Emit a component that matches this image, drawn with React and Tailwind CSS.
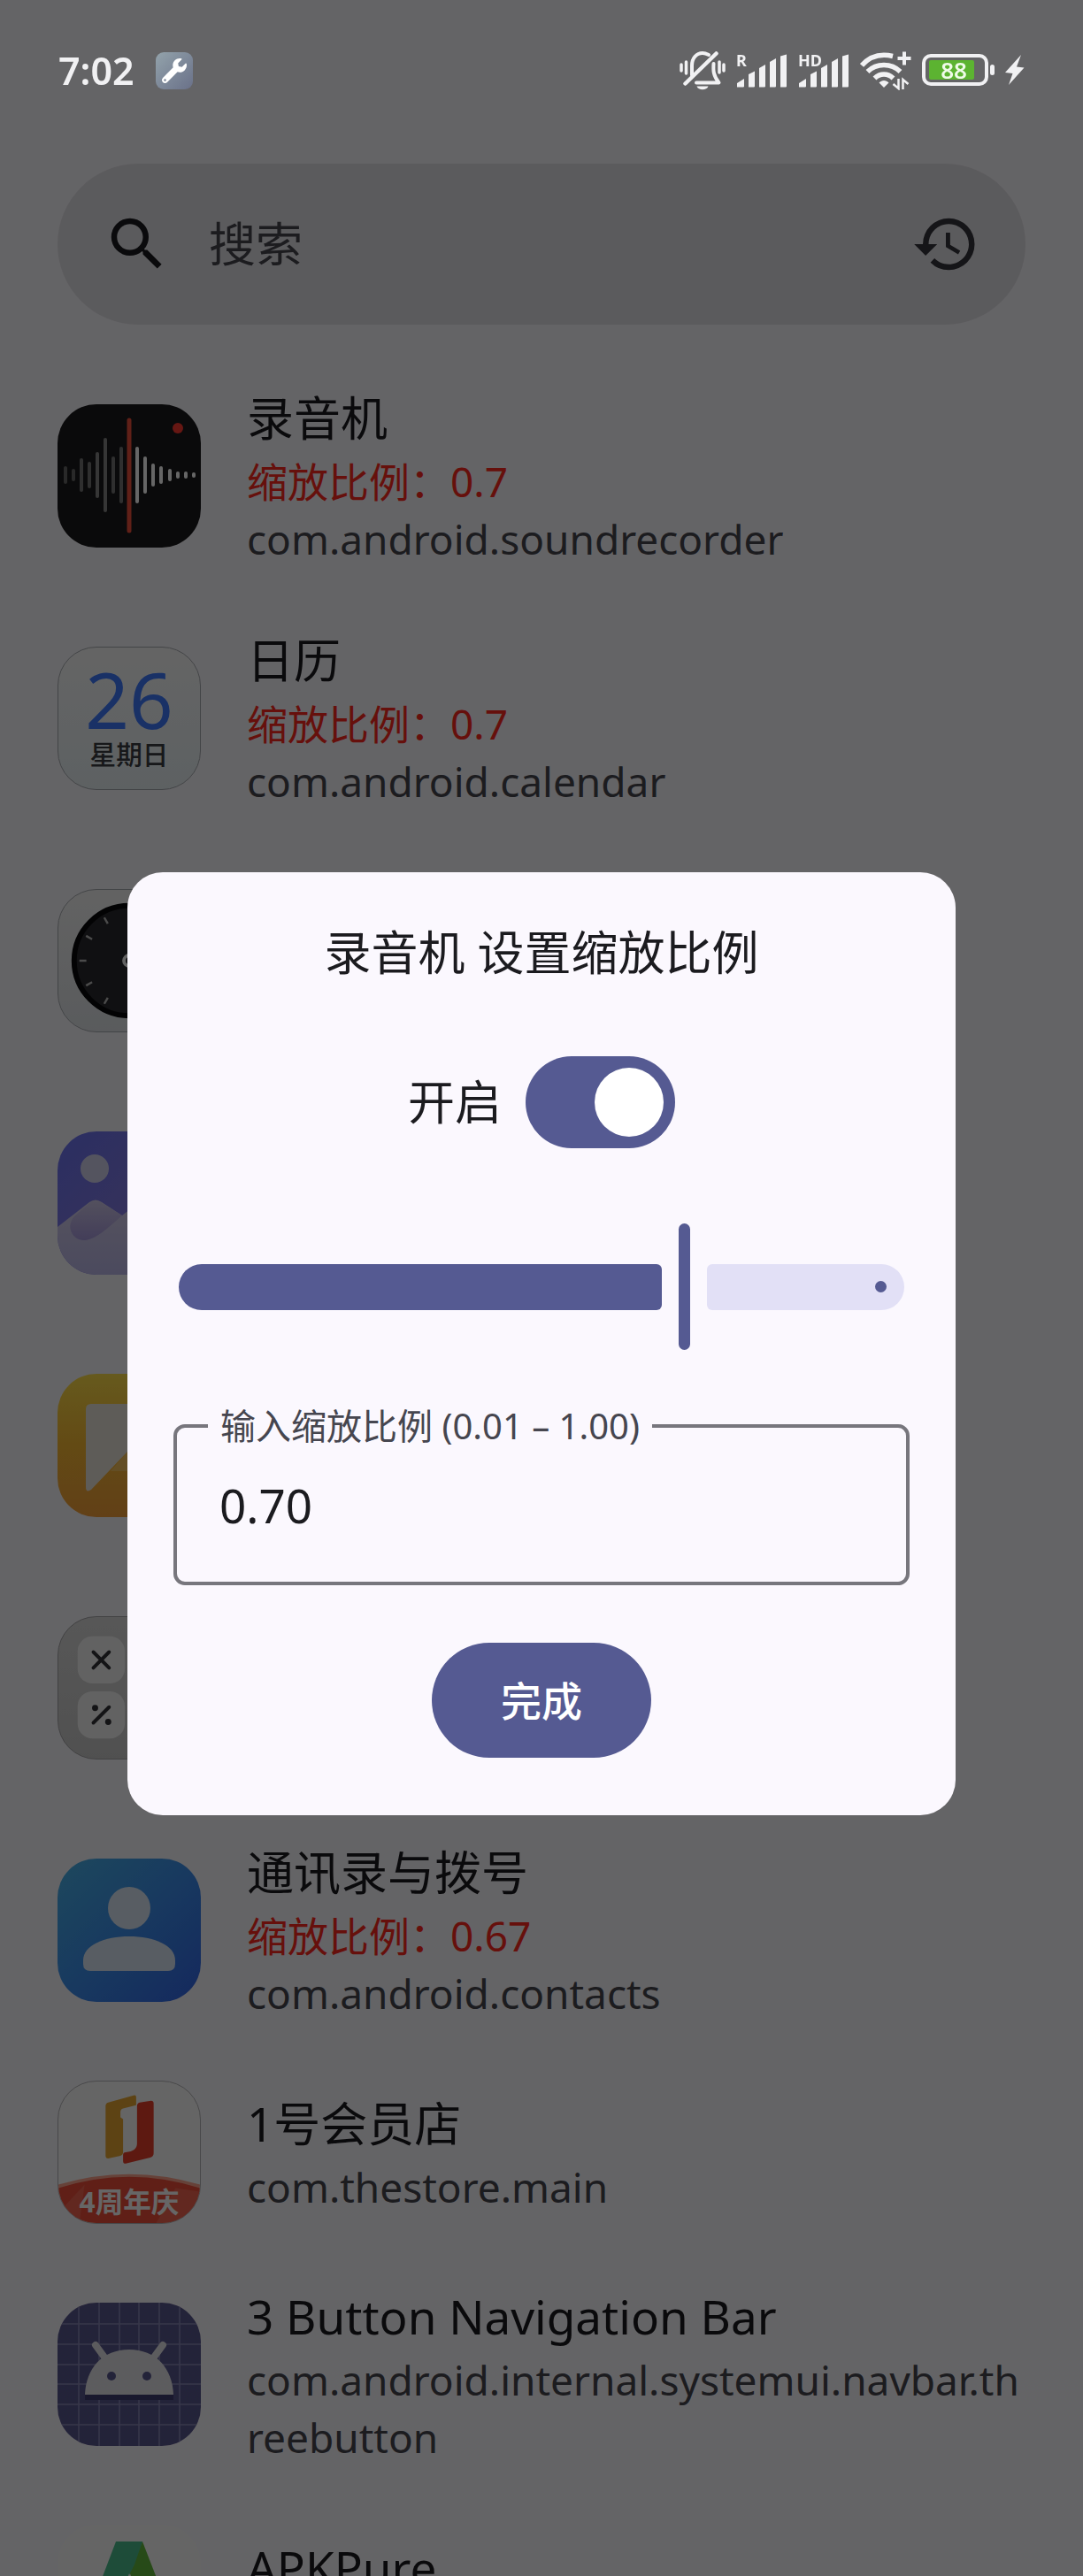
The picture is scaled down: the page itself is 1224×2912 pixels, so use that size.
import React, { useState } from "react";
import { MdSearch, MdHistory } from "react-icons/md";
import { FaWrench } from "react-icons/fa";

/* ---------- status bar drawings ---------- */

function MutedBell() {
  return (
    <svg viewBox="0 0 52 44" className="h-[44px] w-[52px]" fill="none" stroke="currentColor" strokeLinecap="round" strokeLinejoin="round">
      <path d="M14 27V16C14 8 19 2 26 2c3 0 5 1 7 2" strokeWidth="4" />
      <path d="M6.500 36.500 41.500 2.500" strokeWidth="4.500" />
      <path d="M38.500 14c-.5 8-.5 13 6 21.500H19" strokeWidth="4" />
      <path d="M2 15v7M7.500 12v13M45 12v12M50 15v7" strokeWidth="3.500" />
      <path d="M19.500 39.500h13c-1.500 5-11.500 5-13 0z" fill="currentColor" stroke="none" />
    </svg>
  );
}

function Signal({ label }) {
  return (
    <svg viewBox="0 0 58 44" className="h-[44px] w-[58px]" fill="currentColor">
      <path d="M1 40.500v-4.500l8-5v8.500q0 1-1 1zM14 40.500V26l7-3.500v17q0 1-1 1zM26 40.500V19l7-4v24.500q0 1-1 1zM38 40.500V12l7-4v31.500q0 1-1 1zM50 40.500V5.500l7-2v36q0 1-1 1z" />
      <text x="0" y="16.500" fontSize="18" fontWeight="700">{label}</text>
    </svg>
  );
}

function Wifi() {
  return (
    <svg viewBox="0 0 58 44" className="h-[44px] w-[58px]" fill="none" stroke="currentColor" strokeLinecap="butt">
      <path d="M2 16C12 4.500 24 2.500 37 5.500" strokeWidth="5.500" />
      <path d="M8.500 23c10-10 27-10 37 0" strokeWidth="5.500" />
      <path d="M16.500 30.500c6-6 15-6 21 0" strokeWidth="5.500" />
      <path d="M21.500 35.500c3-3.500 8-3.500 11 0L27 41z" fill="currentColor" stroke="none" />
      <path d="M50 .5v15M42.500 8h15" strokeWidth="4" />
      <path d="M41 32v0M43.500 31v11l-6-5M48.500 43V32l6 5" strokeWidth="2.500" />
    </svg>
  );
}

function Battery() {
  return (
    <svg viewBox="0 0 82 44" className="h-[44px] w-[82px]">
      <rect x="2" y="5" width="71" height="32" rx="8" fill="none" stroke="currentColor" strokeWidth="4" />
      <rect x="8" y="10" width="51" height="22" rx="2" fill="#5cb331" />
      <rect x="77" y="15" width="5" height="12" rx="2.500" fill="currentColor" />
      <text x="36" y="30.500" fontSize="26" fontWeight="600" textAnchor="middle" fill="#effbe9">88</text>
    </svg>
  );
}

function Bolt() {
  return (
    <svg viewBox="0 0 22 44" className="h-[44px] w-[22px]" fill="currentColor">
      <path d="M18 4 0 24l8.500 1L4 38 21.500 18.500 13 17.500z" />
    </svg>
  );
}

function StatusBar() {
  return (
    <header className="relative z-20 flex h-[160px] items-center justify-between px-[66px] text-[#f1f1f3]">
      <div className="flex items-center gap-6">
        <time className="text-[43px] leading-[52px] font-semibold">7:02</time>
        <span className="flex size-[42px] items-center justify-center rounded-[9px] bg-gradient-to-br from-[#93a3ab] to-[#6a7189] text-white">
          <FaWrench className="size-[28px]" aria-hidden="true" />
        </span>
      </div>
      <div className="flex items-center gap-3">
        <MutedBell />
        <Signal label="R" />
        <Signal label="HD" />
        <Wifi />
        <Battery />
        <Bolt />
      </div>
    </header>
  );
}

/* ---------- app icons ---------- */

function AppIcon({ className, children }) {
  return (
    <span className={"block size-[162px] shrink-0 overflow-hidden rounded-[44px] " + className}>
      <svg viewBox="0 0 162 162" className="size-full" aria-hidden="true">{children}</svg>
    </span>
  );
}

const WAVE = [
  [9, 10, "#666"], [18, 7, "#666"], [27, 19, "#777"], [36, 15, "#777"],
  [45, 26, "#888"], [54, 42, "#888"], [63, 21, "#777"], [72, 32, "#777"],
  [90, 32, "#fff"], [99, 21, "#fff"], [108, 13, "#fff"], [117, 10, "#fff"],
  [127, 7, "#fff"], [136, 4, "#fff"], [145, 4, "#fff"], [154, 3, "#fff"],
];

function RecorderIcon() {
  return (
    <AppIcon className="bg-[#1a1a1c]">
      {WAVE.map(([x, h, c]) => (
        <path key={x} d={`M${x} ${80 - h + 2}V${80 + h - 2}`} stroke={c} strokeWidth="4" strokeLinecap="round" />
      ))}
      <path d="M81 18V143" stroke="#f0503c" strokeWidth="5" strokeLinecap="round" />
      <circle cx="136" cy="27" r="6" fill="#ff3a30" />
    </AppIcon>
  );
}

function CalendarIcon() {
  return (
    <AppIcon className="border border-[#a9adb2] bg-gradient-to-b from-[#fbfbfb] to-[#e9f2f6]">
      <text x="81" y="93" fontSize="88" textAnchor="middle" fill="#3f7bff">26</text>
      <text x="81" y="134" fontSize="30" fontWeight="500" textAnchor="middle" fill="#3a3c42">星期日</text>
    </AppIcon>
  );
}

function ClockIcon() {
  return (
    <AppIcon className="border border-[#a9adb2] bg-gradient-to-b from-[#f6f6f6] to-[#e0e4e8]">
      <circle cx="81" cy="81" r="63" fill="#29292d" stroke="#08080a" strokeWidth="6" />
      {[0, 30, 60, 90, 120, 150, 180, 210, 240, 270, 300, 330].map((a) => (
        <path key={a} d="M24 81h8" stroke="#bbb" strokeWidth="2.500" transform={`rotate(${a} 81 81)`} />
      ))}
      <circle cx="81" cy="81" r="6" fill="none" stroke="#f4f4f4" strokeWidth="4" />
    </AppIcon>
  );
}

function GalleryIcon() {
  return (
    <AppIcon className="bg-gradient-to-br from-[#6b75f5] to-[#9a7fd6]">
      <defs>
        <linearGradient id="snow" x1="0" y1="0" x2="0" y2="1">
          <stop offset="0" stopColor="#d9d2ea" />
          <stop offset="1" stopColor="#bcb9ea" />
        </linearGradient>
        <linearGradient id="shade" x1="0" y1="0" x2="0" y2="1">
          <stop offset="0" stopColor="#cfc8ea" />
          <stop offset="1" stopColor="#a79ade" />
        </linearGradient>
      </defs>
      <circle cx="42" cy="42" r="16" fill="#d3d3ee" />
      <path d="M0 108 36 80q7-5 14 0l23 15 44-34 45 34v67H0z" fill="url(#snow)" />
      <path d="M36 81q7-5 14 0l23 14C56 110 44 121 32 123c-13 1-20-11-17-20q1-4 4-7z" fill="url(#shade)" />
    </AppIcon>
  );
}

function FilesIcon() {
  return (
    <AppIcon className="bg-gradient-to-b from-[#ffe04a] via-[#f7b933] to-[#f5a03a]">
      <path d="M79 88 60 110h42V88z" fill="#f8c45c" />
      <path d="M32 40q0-6 6-6h86v54H79l-41 43q-6 4-6-3z" fill="#ece7db" />
    </AppIcon>
  );
}

function CalculatorIcon() {
  return (
    <AppIcon className="border border-[#a5a5a8] bg-gradient-to-b from-[#dadada] to-[#c9c9c9]">
      {[22, 85].map((y) => [22, 85].map((x) => (
        <rect key={x + "-" + y} x={x} y={y} width="54" height="54" rx="17" fill="#f5f5f5" />
      )))}
      <path d="M40 40 58 58M58 40 40 58M40 121 58 103" stroke="#333338" strokeWidth="4" strokeLinecap="round" />
      <circle cx="42" cy="104" r="3.500" fill="#333338" />
      <circle cx="57" cy="120" r="3.500" fill="#333338" />
    </AppIcon>
  );
}

function ContactsIcon() {
  return (
    <AppIcon className="bg-gradient-to-br from-[#4ab4e8] via-[#3d8fee] to-[#3565e8]">
      <circle cx="81" cy="56" r="24" fill="#dce9f7" />
      <path d="M29 115c0-17 24-27 52-27s52 10 52 27v4q0 8-8 8H37q-8 0-8-8z" fill="#dce9f7" />
    </AppIcon>
  );
}

function StoreIcon() {
  return (
    <AppIcon className="border border-[#b5b5b8] bg-[#fcfcfc]">
      <path d="M54 28q0-3 3-4l29-8q3-1 3 2v9l-15 4q-3 1-3 4v6l3 2v38q0 3-3 4l-14 3q-3 0-3-3z" fill="#e8a832" />
      <path d="M90 28q0-3 3-4l13-2q3 0 3 3v57q0 4-4 5l-28 7q-3 0-3-3v-7q0-3 3-3 13-1 13-10z" fill="#e8402c" />
      <path d="M0 118Q81 94 162 118v44H0z" fill="#ffa58f" />
      <path d="M0 122Q81 96 162 122v40H0z" fill="#f04f3a" />
      <path d="M0 150 30 118 24 162H0zM112 162l22-40 28 4v36z" fill="#f77a68" opacity=".5" />
      <text x="81" y="150" fontSize="32" fontWeight="700" textAnchor="middle" fill="#fff">4周年庆</text>
    </AppIcon>
  );
}

function AndroidIcon() {
  return (
    <AppIcon className="bg-[#59578f]">
      <path d="M24 0v162M47 0v162M70 0v162M92 0v162M115 0v162M138 0v162M0 24h162M0 47h162M0 70h162M0 92h162M0 115h162M0 138h162" stroke="#8b8ab8" strokeWidth="1.500" />
      <path d="M31 104h100v6H31z" fill="#3f3d70" />
      <path d="M43 48 54 63M119 48 108 63" stroke="#e6e6ea" strokeWidth="8" strokeLinecap="round" />
      <path d="M31 104c1-30 20-51 50-51s49 21 50 51z" fill="#e6e6ea" />
      <circle cx="61" cy="83" r="5" fill="#59578f" />
      <circle cx="101" cy="83" r="5" fill="#59578f" />
    </AppIcon>
  );
}

function ApkPureIcon() {
  return (
    <AppIcon className="bg-[#fdfdfd]">
      <path d="M66 19h30L46 140H20z" fill="#4cbf8f" />
      <path d="M96 19 81 53l36 87h26z" fill="#62b83c" />
      <path d="M81 19h15l-9 26-6 12z" fill="#4cbf8f" />
    </AppIcon>
  );
}

/* ---------- list ---------- */

const APPS = [
  { Icon: RecorderIcon, name: "录音机", scale: "0.7", pkg: "com.android.soundrecorder" },
  { Icon: CalendarIcon, name: "日历", scale: "0.7", pkg: "com.android.calendar" },
  { Icon: ClockIcon },
  { Icon: GalleryIcon },
  { Icon: FilesIcon },
  { Icon: CalculatorIcon },
  { Icon: ContactsIcon, name: "通讯录与拨号", scale: "0.67", pkg: "com.android.contacts" },
  { Icon: StoreIcon, name: "1号会员店", pkg: "com.thestore.main" },
  { Icon: AndroidIcon, name: "3 Button Navigation Bar", pkg: "com.android.internal.systemui.navbar.threebutton" },
  { Icon: ApkPureIcon, name: "APKPure" },
];

function AppRow({ Icon, name, scale, pkg }) {
  return (
    <li className={"flex items-center gap-[52px] py-[33px] " + (name ? "" : "min-h-[274px]")}>
      <Icon />
      {name && (
        <div className="min-w-0 flex-1">
          <h2 className="text-[53px] leading-[78px] text-[#1b1b1f]">{name}</h2>
          {scale && <p className="text-[46px] leading-[65px] text-[#ff2a20]">缩放比例：{scale}</p>}
          <p className="min-h-[65px] text-[46px] leading-[65px] break-all text-[#46464f]">{pkg}</p>
        </div>
      )}
    </li>
  );
}

/* ---------- dialog ---------- */

const MIN = 0.01;
const MAX = 1;

function ScaleSlider({ value, onChange }) {
  const percent = ((value - MIN) / (MAX - MIN)) * 100;
  return (
    <div className="relative mx-[6px] flex h-[143px] items-center">
      <div
        className="h-[52px] shrink-0 rounded-l-[26px] rounded-r-[6px] bg-[#555a92]"
        style={{ width: `calc(${percent}% - 26px)` }}
      />
      <div className="mx-[19px] h-full w-[13px] shrink-0 rounded-full bg-[#555a92]" />
      <div className="flex h-[52px] flex-1 items-center justify-end rounded-l-[6px] rounded-r-[26px] bg-[#e2e0f6] pr-5">
        <span className="size-[13px] rounded-full bg-[#555a92]" />
      </div>
      <input
        type="range"
        aria-label="缩放比例"
        min={MIN}
        max={MAX}
        step="0.01"
        value={value}
        onChange={(e) => onChange(e.target.value)}
        className="absolute inset-0 size-full cursor-pointer opacity-0"
      />
    </div>
  );
}

function ScaleDialog() {
  const [enabled, setEnabled] = useState(true);
  const [text, setText] = useState("0.70");
  const value = Math.min(MAX, Math.max(MIN, Number(text) || MIN));

  return (
    <div className="fixed inset-0 z-10 flex items-center justify-center bg-black/60 px-36 pt-[126px]">
      <section
        role="dialog"
        aria-labelledby="dialog-title"
        className="w-full rounded-[40px] bg-[#fbf8fe] px-[52px] pt-[52px] pb-[65px] text-[#1b1b1f]"
      >
        <h1 id="dialog-title" className="text-center text-[53px] leading-[78px]">录音机 设置缩放比例</h1>

        <label className="mt-[78px] flex items-center justify-center gap-[27px] text-[53px] leading-[78px]">
          开启
          <input
            type="checkbox"
            role="switch"
            checked={enabled}
            onChange={(e) => setEnabled(e.target.checked)}
            className="peer sr-only"
          />
          <span className="flex h-[104px] w-[169px] items-center rounded-full bg-[#c7c6d0] px-[13px] peer-checked:justify-end peer-checked:bg-[#555a92]">
            <span className="size-[78px] rounded-full bg-white" />
          </span>
        </label>

        <div className="mt-[85px]">
          <ScaleSlider value={value} onChange={(v) => setText(Number(v).toFixed(2))} />
        </div>

        <div className="relative mt-[84px] rounded-[13px] border-4 border-[#77767d]">
          <label
            htmlFor="scale-input"
            className="absolute -top-[28px] left-[35px] bg-[#fbf8fe] px-[14px] text-[40px] leading-[52px] whitespace-nowrap text-[#46464f]"
          >
            输入缩放比例 (0.01 – 1.00)
          </label>
          <input
            id="scale-input"
            type="text"
            inputMode="decimal"
            value={text}
            onChange={(e) => setText(e.target.value)}
            className="block h-[174px] w-full bg-transparent px-12 text-[53px] leading-[78px] outline-none"
          />
        </div>

        <div className="mt-[65px] flex justify-center">
          <button type="button" className="h-[130px] rounded-full bg-[#555a92] px-[78px] text-[46px] leading-[65px] font-medium text-white">
            完成
          </button>
        </div>
      </section>
    </div>
  );
}

export default function App() {
  return (
    <div className="h-screen overflow-hidden bg-[#fbf9ff] font-['Noto_Sans','Noto_Sans_CJK_SC',sans-serif]">
      <StatusBar />
      <main className="px-[65px]">
        <form role="search" className="mt-[25px] flex h-[182px] items-center gap-[42px] rounded-full bg-[#e4e3e8] px-[51px]">
          <MdSearch className="size-[78px] shrink-0 text-[#1b1b1f]" aria-hidden="true" />
          <input
            type="search"
            aria-label="搜索"
            placeholder="搜索"
            className="min-w-0 flex-1 bg-transparent text-[53px] leading-[78px] outline-none placeholder:text-[#46464f]"
          />
          <button type="button" aria-label="历史记录" className="shrink-0 text-[#36363c]">
            <MdHistory className="size-[78px]" />
          </button>
        </form>
        <ul className="mt-[34px]">
          {APPS.map((app, i) => (
            <AppRow key={i} {...app} />
          ))}
        </ul>
      </main>
      <ScaleDialog />
    </div>
  );
}
